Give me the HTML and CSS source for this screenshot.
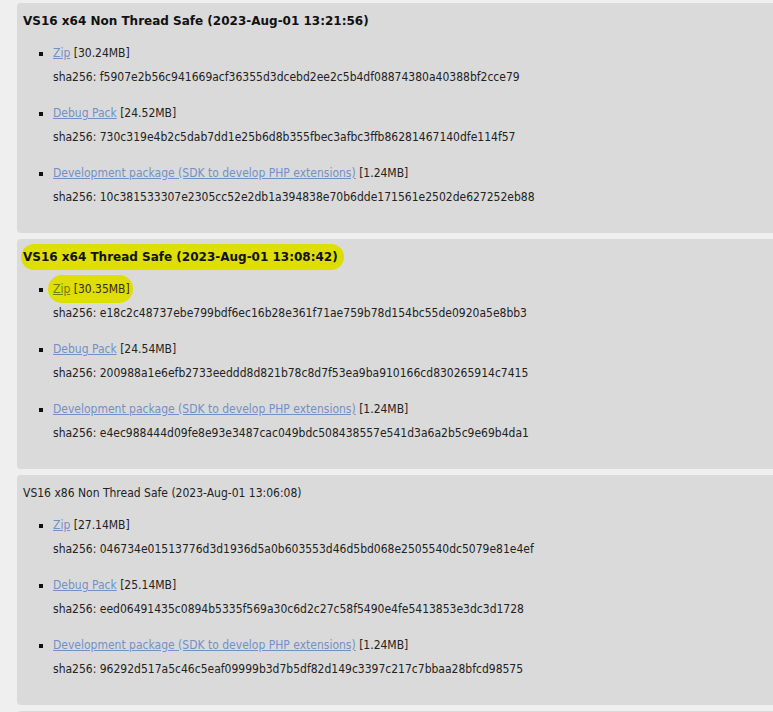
FILE: index.html
```html
<!DOCTYPE html>
<html lang="en">
<head>
  <meta charset="UTF-8" />
  <meta name="viewport" content="width=device-width, initial-scale=1.0"/>
  <title>PHP for Windows: Downloads</title>
  <link rel="stylesheet" href="styles.css">
</head>
<body>
  <div class="builds">

    <div class="build">
      <h4 class="build-title">VS16 x64 Non Thread Safe (2023-Aug-01 13:21:56)</h4>
      <ul>
        <li>
          <div class="file"><a href="#">Zip</a> [30.24MB]</div>
          <p class="sha">sha256: f5907e2b56c941669acf36355d3dcebd2ee2c5b4df08874380a40388bf2cce79</p>
        </li>
        <li>
          <div class="file"><a href="#">Debug Pack</a> [24.52MB]</div>
          <p class="sha">sha256: 730c319e4b2c5dab7dd1e25b6d8b355fbec3afbc3ffb86281467140dfe114f57</p>
        </li>
        <li>
          <div class="file"><a href="#">Development package (SDK to develop PHP extensions)</a> [1.24MB]</div>
          <p class="sha">sha256: 10c381533307e2305cc52e2db1a394838e70b6dde171561e2502de627252eb88</p>
        </li>
      </ul>
    </div>

    <div class="build">
      <h4 class="build-title"><span class="marker">VS16 x64 Thread Safe (2023-Aug-01 13:08:42)</span></h4>
      <ul>
        <li>
          <div class="file"><span class="marker marker-small"><a href="#">Zip</a> [30.35MB]</span></div>
          <p class="sha">sha256: e18c2c48737ebe799bdf6ec16b28e361f71ae759b78d154bc55de0920a5e8bb3</p>
        </li>
        <li>
          <div class="file"><a href="#">Debug Pack</a> [24.54MB]</div>
          <p class="sha">sha256: 200988a1e6efb2733eeddd8d821b78c8d7f53ea9ba910166cd830265914c7415</p>
        </li>
        <li>
          <div class="file"><a href="#">Development package (SDK to develop PHP extensions)</a> [1.24MB]</div>
          <p class="sha">sha256: e4ec988444d09fe8e93e3487cac049bdc508438557e541d3a6a2b5c9e69b4da1</p>
        </li>
      </ul>
    </div>

    <div class="build">
      <h4 class="build-title plain">VS16 x86 Non Thread Safe (2023-Aug-01 13:06:08)</h4>
      <ul>
        <li>
          <div class="file"><a href="#">Zip</a> [27.14MB]</div>
          <p class="sha">sha256: 046734e01513776d3d1936d5a0b603553d46d5bd068e2505540dc5079e81e4ef</p>
        </li>
        <li>
          <div class="file"><a href="#">Debug Pack</a> [25.14MB]</div>
          <p class="sha">sha256: eed06491435c0894b5335f569a30c6d2c27c58f5490e4fe5413853e3dc3d1728</p>
        </li>
        <li>
          <div class="file"><a href="#">Development package (SDK to develop PHP extensions)</a> [1.24MB]</div>
          <p class="sha">sha256: 96292d517a5c46c5eaf09999b3d7b5df82d149c3397c217c7bbaa28bfcd98575</p>
        </li>
      </ul>
    </div>

    <div class="build"></div>

  </div>
</body>
</html>
```

FILE: styles.css
```css
html, body {
  margin: 0;
  overflow: hidden;
}
body {
  font-family: "DejaVu Sans Condensed", "DejaVu Sans", Verdana, sans-serif;
  font-stretch: condensed;
  font-size: 12px;
  color: #222;
  background-color: #efefef;
}
.builds {
  padding: 3px 0 0 17px;
  margin-right: -20px;
}
.build {
  background: #dadada;
  border-radius: 4px;
  padding: 8px 6px 10px;
  margin-bottom: 6px;
  min-height: 212px;
}
.build-title {
  margin: 0 0 12px;
  font-family: "DejaVu Sans", Verdana, sans-serif;
  font-stretch: normal;
  font-size: 12px;
  line-height: 20px;
  font-weight: bold;
  color: #111;
}
.build-title.plain {
  font-family: "DejaVu Sans Condensed", "DejaVu Sans", Verdana, sans-serif;
  font-stretch: condensed;
  font-weight: normal;
  color: #222;
}
.build ul {
  margin: 0;
  padding-left: 30px;
  list-style-type: square;
}
.build li {
  margin-bottom: 16px;
}
.build li::marker {
  color: #111;
}
.file {
  line-height: 20px;
}
.sha {
  margin: 4px 0 0;
  line-height: 20px;
}
a {
  color: #7290c8;
}
.marker {
  background: #dede00;
  border-radius: 14px;
  padding: 6px 6px 6px 2px;
  margin-left: -2px;
}
.marker-small {
  padding: 7px 3px 7px 5px;
  margin-left: -5px;
  color: #3a2a00;
}
.marker a {
  color: #6b8200;
}
```
